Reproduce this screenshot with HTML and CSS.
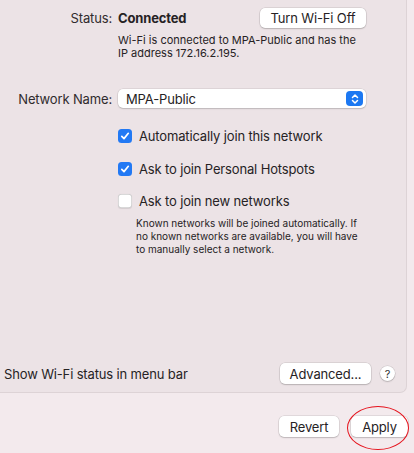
FILE: index.html
```html
<!DOCTYPE html>
<html>
<head>
<meta charset="utf-8">
<link rel="stylesheet" href="styles.css">
</head>
<body>
<div class="window">
  <div class="panel">
    <div class="row status-row">
      <div class="label">Status:</div>
      <div class="content status-content">
        <span class="connected">Connected</span>
        <button class="btn turn-off">Turn Wi-Fi Off</button>
      </div>
    </div>
    <div class="row desc-row">
      <div class="label"></div>
      <div class="content desc">Wi-Fi is connected to MPA-Public and has the IP address 172.16.2.195.</div>
    </div>
    <div class="row network-row">
      <div class="label">Network Name:</div>
      <div class="content">
        <div class="select">
          <span>MPA-Public</span>
          <span class="stepper">
            <svg width="10" height="12" viewBox="0 0 10 12"><path d="M2.5 4.5 L5 2 L7.5 4.5 M2.5 7.5 L5 10 L7.5 7.5" fill="none" stroke="#fff" stroke-width="1.5" stroke-linecap="round" stroke-linejoin="round"/></svg>
          </span>
        </div>
      </div>
    </div>
    <div class="checks">
      <label class="check-row"><span class="cb on"><svg width="10" height="10" viewBox="0 0 10 10"><path d="M1.8 5.3 L4 7.6 L8.3 2.3" fill="none" stroke="#fff" stroke-width="1.7" stroke-linecap="round" stroke-linejoin="round"/></svg></span>Automatically join this network</label>
      <label class="check-row"><span class="cb on"><svg width="10" height="10" viewBox="0 0 10 10"><path d="M1.8 5.3 L4 7.6 L8.3 2.3" fill="none" stroke="#fff" stroke-width="1.7" stroke-linecap="round" stroke-linejoin="round"/></svg></span>Ask to join Personal Hotspots</label>
      <label class="check-row"><span class="cb"></span>Ask to join new networks</label>
      <div class="help">Known networks will be joined automatically. If no known networks are available, you will have to manually select a network.</div>
    </div>
    <div class="bottom-row">
      <span class="menu-label">Show Wi-Fi status in menu bar</span>
      <div class="bottom-actions">
        <button class="btn advanced">Advanced...</button>
        <span class="help-btn">?</span>
      </div>
    </div>
  </div>
  <div class="footer">
    <button class="btn revert">Revert</button>
    <div class="apply-wrap">
      <button class="btn apply">Apply</button>
      <span class="circle"></span>
    </div>
  </div>
</div>
</body>
</html>
```

FILE: styles.css
```css
* { box-sizing: border-box; }
html, body {
  margin: 0;
  padding: 0;
  background: #f3eaed;
  font-family: Inter, "Liberation Sans", Arial, sans-serif;
  color: #262224;
}
.window {
  width: 414px;
  height: 453px;
  overflow: hidden;
}
.panel {
  width: 407px;
  height: 393px;
  background: #ece3e6;
  border-right: 1px solid #ddd3d6;
  border-bottom: 1px solid #ddd3d6;
  border-bottom-right-radius: 7px;
  display: flex;
  flex-direction: column;
  padding-top: 8px;
}
.row {
  display: flex;
  align-items: center;
}
.label {
  width: 112px;
  text-align: right;
  font-size: 13px;
  letter-spacing: -0.15px;
  color: #302b2d;
  flex: none;
}
.content {
  margin-left: 6px;
  width: 248px;
}
.status-row { height: 20px; }
.status-content {
  display: flex;
  align-items: center;
  justify-content: space-between;
}
.connected {
  font-weight: 700;
  font-size: 13px;
  letter-spacing: -0.15px;
}
.btn {
  font-family: inherit;
  font-size: 13px;
  letter-spacing: -0.15px;
  color: #262224;
  background: #fff;
  border: none;
  border-radius: 5px;
  box-shadow: 0 0 0 0.5px rgba(0,0,0,0.14), 0 1px 1.5px rgba(0,0,0,0.16);
  height: 20px;
  padding: 0;
  line-height: 20px;
}
.turn-off { width: 106px; }
.desc-row { margin-top: 6px; align-items: flex-start; }
.desc {
  font-size: 11px;
  line-height: 13px;
  width: 246px;
}
.network-row { margin-top: 29px; }
.select {
  height: 19px;
  background: #fff;
  border-radius: 5px;
  box-shadow: 0 0 0 0.5px rgba(0,0,0,0.12), 0 1px 1.5px rgba(0,0,0,0.15);
  display: flex;
  align-items: center;
  justify-content: space-between;
  padding-left: 8px;
  padding-right: 3px;
  font-size: 13px;
  letter-spacing: -0.15px;
}
.stepper {
  width: 17px;
  height: 15px;
  background: #1c78f2;
  border-radius: 4px;
  display: flex;
  align-items: center;
  justify-content: center;
}
.checks {
  margin-left: 118px;
  margin-top: 18px;
  display: flex;
  flex-direction: column;
}
.check-row {
  display: flex;
  align-items: center;
  height: 20px;
  font-size: 13px;
  letter-spacing: -0.15px;
  margin-bottom: 12.5px;
}
.check-row:nth-child(3) { margin-bottom: 0; }
.cb {
  width: 14px;
  height: 14px;
  border-radius: 3.5px;
  background: #fff;
  box-shadow: inset 0 0 0 0.75px rgba(0,0,0,0.2), 0 0.5px 1px rgba(0,0,0,0.1);
  margin-right: 7px;
  display: flex;
  align-items: center;
  justify-content: center;
  flex: none;
}
.cb.on {
  background: #2279f4;
  box-shadow: none;
}
.help {
  margin-left: 18px;
  margin-top: 6px;
  font-size: 10px;
  line-height: 13px;
  width: 232px;
}
.bottom-row {
  margin-top: auto;
  margin-bottom: 8px;
  display: flex;
  align-items: center;
  justify-content: space-between;
  padding-left: 4px;
  padding-right: 11px;
}
.menu-label { font-size: 13px; letter-spacing: -0.15px; }
.bottom-actions {
  display: flex;
  align-items: center;
  gap: 9px;
}
.advanced { width: 91px; height: 21px; }
.help-btn {
  width: 15px;
  height: 15px;
  border-radius: 50%;
  background: #fff;
  box-shadow: 0 0 0 0.5px rgba(0,0,0,0.14), 0 1px 1.5px rgba(0,0,0,0.16);
  font-size: 11px;
  display: flex;
  align-items: center;
  justify-content: center;
  color: #333;
}
.footer {
  display: flex;
  justify-content: flex-end;
  align-items: center;
  gap: 12px;
  padding-right: 6px;
  margin-top: 23px;
}
.revert { width: 60px; height: 21px; }
.apply-wrap { position: relative; }
.apply { width: 57px; height: 21px; display: block; }
.circle {
  position: absolute;
  left: -4px;
  top: -10px;
  width: 62px;
  height: 44px;
  border: 1.75px solid #e5121c;
  border-radius: 50%;
  pointer-events: none;
}
```
